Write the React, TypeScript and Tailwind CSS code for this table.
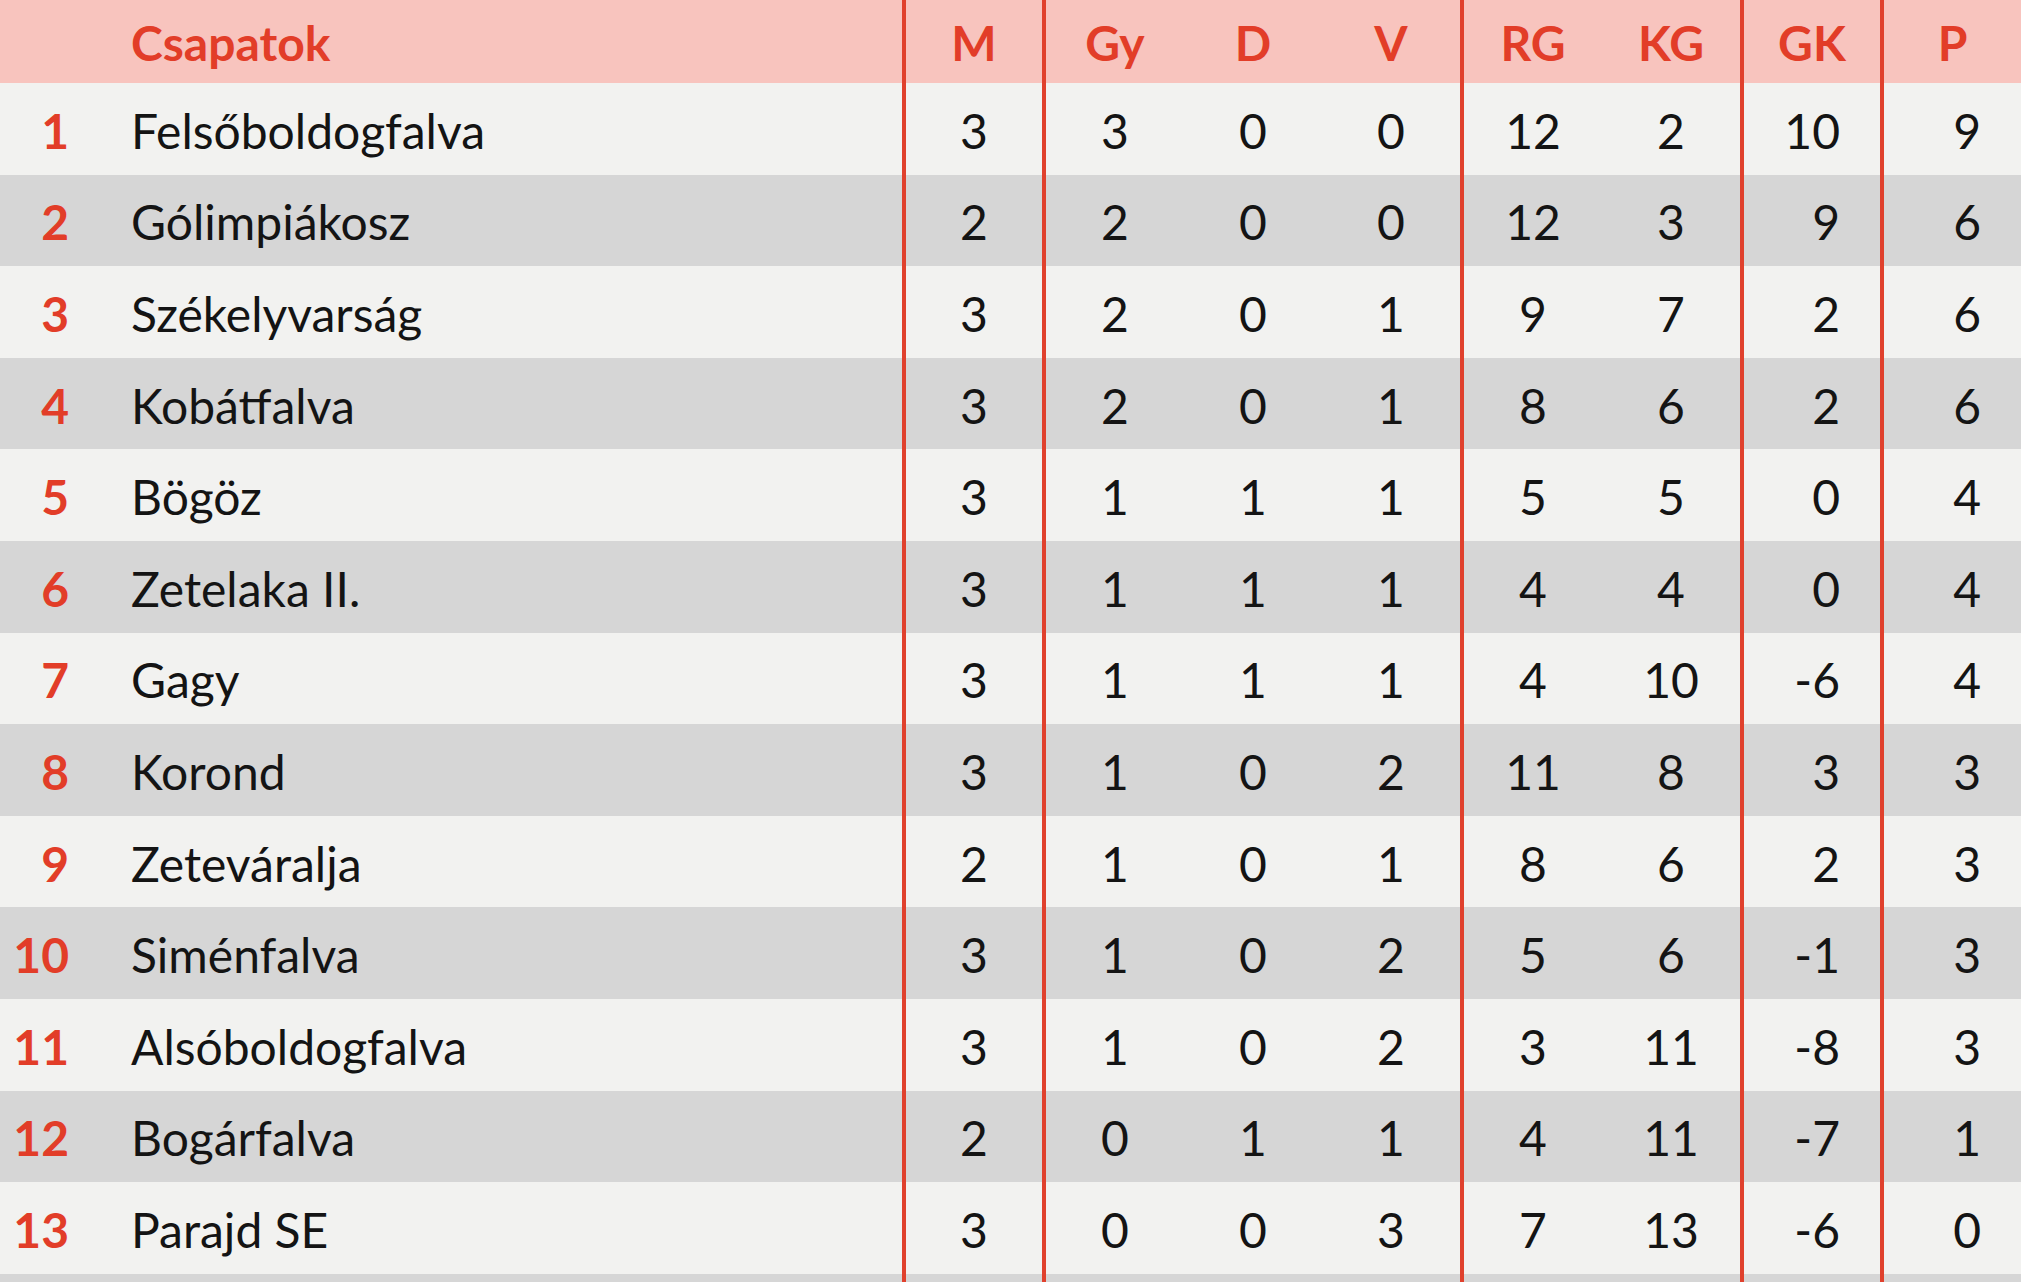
const rows: [number, string, number, number, number, number, number, number, number, number][] = [
  [1, 'Felsőboldogfalva', 3, 3, 0, 0, 12, 2, 10, 9],
  [2, 'Gólimpiákosz', 2, 2, 0, 0, 12, 3, 9, 6],
  [3, 'Székelyvarság', 3, 2, 0, 1, 9, 7, 2, 6],
  [4, 'Kobátfalva', 3, 2, 0, 1, 8, 6, 2, 6],
  [5, 'Bögöz', 3, 1, 1, 1, 5, 5, 0, 4],
  [6, 'Zetelaka II.', 3, 1, 1, 1, 4, 4, 0, 4],
  [7, 'Gagy', 3, 1, 1, 1, 4, 10, -6, 4],
  [8, 'Korond', 3, 1, 0, 2, 11, 8, 3, 3],
  [9, 'Zeteváralja', 2, 1, 0, 1, 8, 6, 2, 3],
  [10, 'Siménfalva', 3, 1, 0, 2, 5, 6, -1, 3],
  [11, 'Alsóboldogfalva', 3, 1, 0, 2, 3, 11, -8, 3],
  [12, 'Bogárfalva', 2, 0, 1, 1, 4, 11, -7, 1],
  [13, 'Parajd SE', 3, 0, 0, 3, 7, 13, -6, 0],
  [14, '', 0, 0, 0, 0, 0, 0, 0, 0],
]

const line = 'border-l-4 border-[#e0412d]'

export default function App() {
  return (
    <div className="w-[2021px] h-[1282px] overflow-hidden bg-[#f2f2f0] font-['Lato',sans-serif] text-[48px] leading-none text-[#141414]">
      {/* header */}
      <div className="flex h-[83px] bg-[#f8c4be] text-[#e23d28] font-bold text-[48px]">
        <div className="w-[902px] flex items-center pl-[131px] pt-[2px]">Csapatok</div>
        <div className={`${line} w-[140px] flex items-center justify-center pt-[2px]`}>M</div>
        <div className={`${line} w-[142px] flex items-center justify-center pt-[2px]`}>Gy</div>
        <div className="w-[138px] flex items-center justify-center pt-[2px]">D</div>
        <div className="w-[138px] flex items-center justify-center pt-[2px]">V</div>
        <div className={`${line} w-[142px] flex items-center justify-center pt-[2px]`}>RG</div>
        <div className="w-[138px] flex items-center justify-center pt-[2px]">KG</div>
        <div className={`${line} w-[140px] flex items-center justify-center pt-[2px]`}>GK</div>
        <div className={`${line} flex-1 flex items-center justify-center pt-[2px]`}>P</div>
      </div>

      {/* rows */}
      {rows.map((r, i) => {
        const empty = r[1] === ''
        return (
          <div
            key={r[0]}
            className={`flex h-[91.6px] ${i % 2 === 1 ? 'bg-[#d6d6d6]' : 'bg-[#f2f2f0]'}`}
          >
            <div className="w-[69px] flex items-center justify-end pt-[4px] font-bold text-[#e23d28]">
              {empty ? '' : r[0]}
            </div>
            <div className="w-[833px] flex items-center pl-[62px] pt-[4px]">{r[1]}</div>
            <div className={`${line} w-[140px] flex items-center justify-center pt-[4px]`}>{empty ? '' : r[2]}</div>
            <div className={`${line} w-[142px] flex items-center justify-center pt-[4px]`}>{empty ? '' : r[3]}</div>
            <div className="w-[138px] flex items-center justify-center pt-[4px]">{empty ? '' : r[4]}</div>
            <div className="w-[138px] flex items-center justify-center pt-[4px]">{empty ? '' : r[5]}</div>
            <div className={`${line} w-[142px] flex items-center justify-center pt-[4px]`}>{empty ? '' : r[6]}</div>
            <div className="w-[138px] flex items-center justify-center pt-[4px]">{empty ? '' : r[7]}</div>
            <div className={`${line} w-[140px] flex items-center justify-end pr-[40px] pt-[4px]`}>{empty ? '' : r[8]}</div>
            <div className={`${line} flex-1 flex items-center justify-end pr-[40px] pt-[4px]`}>{empty ? '' : r[9]}</div>
          </div>
        )
      })}
    </div>
  )
}
